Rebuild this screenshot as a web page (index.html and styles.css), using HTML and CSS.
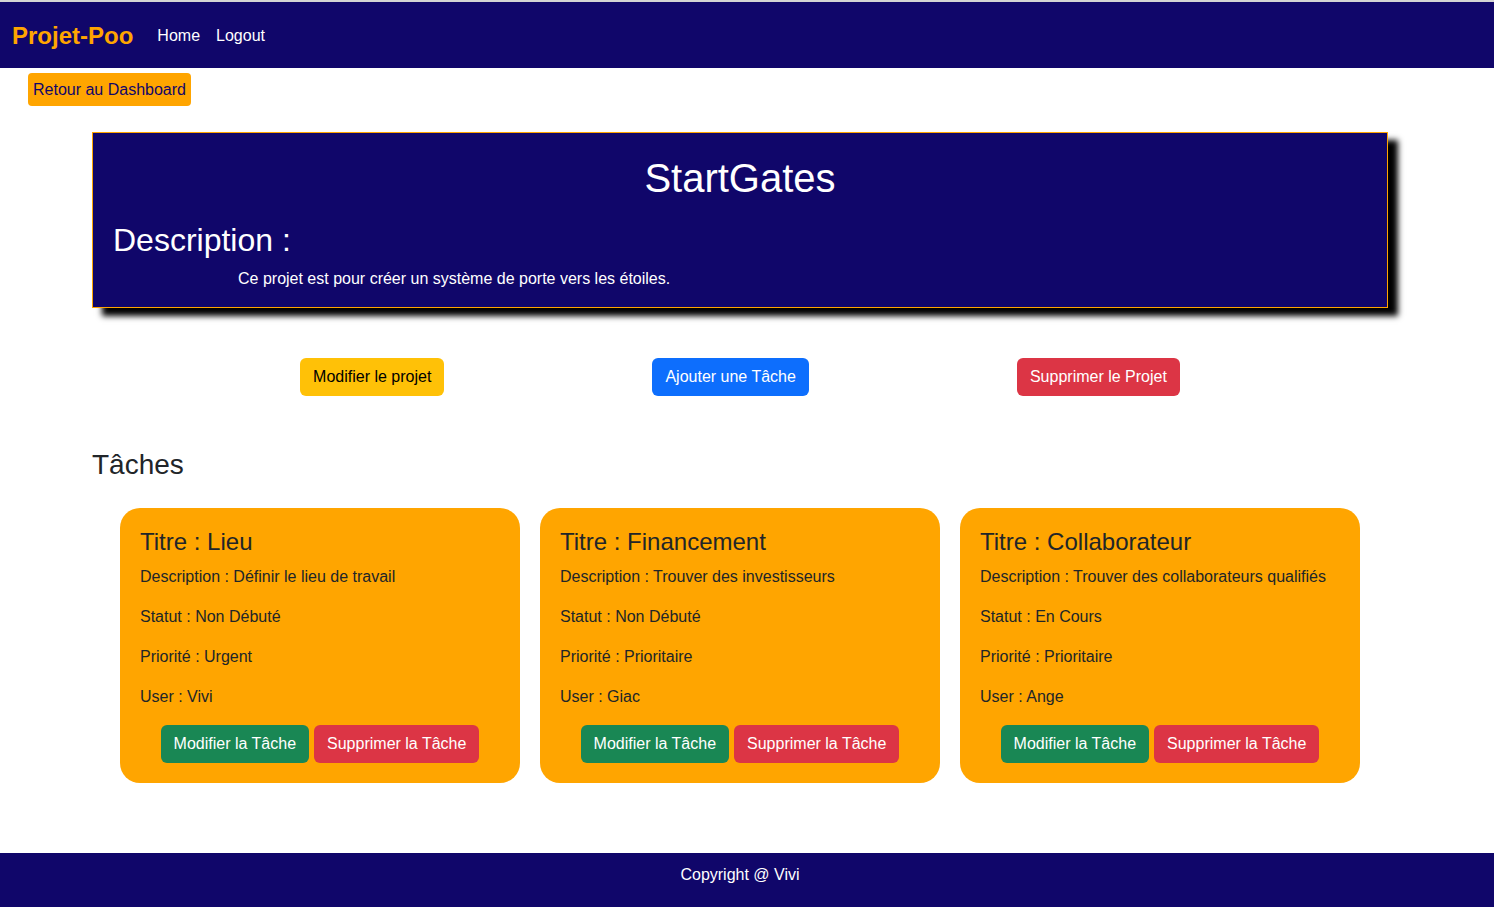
FILE: index.html
```html
<!DOCTYPE html>
<html lang="fr">
<head>
<meta charset="utf-8">
<title>Projet-Poo</title>
<link rel="stylesheet" href="styles.css">
</head>
<body>
<div class="page">
  <nav class="navbar">
    <a class="brand" href="#">Projet-Poo</a>
    <a class="nav-link" href="#">Home</a>
    <a class="nav-link" href="#">Logout</a>
  </nav>
  <main class="main">
    <div class="back-row">
      <a class="btn btn-back" href="#">Retour au Dashboard</a>
    </div>
    <section class="project">
      <h1 class="project-title">StartGates</h1>
      <h2 class="project-sub">Description :</h2>
      <p class="project-desc">Ce projet est pour créer un système de porte vers les étoiles.</p>
    </section>
    <div class="actions">
      <a class="btn btn-warning" href="#">Modifier le projet</a>
      <a class="btn btn-primary" href="#">Ajouter une Tâche</a>
      <a class="btn btn-danger" href="#">Supprimer le Projet</a>
    </div>
    <h3 class="tasks-title">Tâches</h3>
    <div class="cards">
      <div class="card">
        <h4 class="card-title">Titre : Lieu</h4>
        <p>Description : Définir le lieu de travail</p>
        <p>Statut : Non Débuté</p>
        <p>Priorité : Urgent</p>
        <p>User : Vivi</p>
        <div class="card-actions">
          <a class="btn btn-success" href="#">Modifier la Tâche</a>
          <a class="btn btn-danger" href="#">Supprimer la Tâche</a>
        </div>
      </div>
      <div class="card">
        <h4 class="card-title">Titre : Financement</h4>
        <p>Description : Trouver des investisseurs</p>
        <p>Statut : Non Débuté</p>
        <p>Priorité : Prioritaire</p>
        <p>User : Giac</p>
        <div class="card-actions">
          <a class="btn btn-success" href="#">Modifier la Tâche</a>
          <a class="btn btn-danger" href="#">Supprimer la Tâche</a>
        </div>
      </div>
      <div class="card">
        <h4 class="card-title">Titre : Collaborateur</h4>
        <p>Description : Trouver des collaborateurs qualifiés</p>
        <p>Statut : En Cours</p>
        <p>Priorité : Prioritaire</p>
        <p>User : Ange</p>
        <div class="card-actions">
          <a class="btn btn-success" href="#">Modifier la Tâche</a>
          <a class="btn btn-danger" href="#">Supprimer la Tâche</a>
        </div>
      </div>
    </div>
  </main>
  <footer class="footer">Copyright @ Vivi</footer>
</div>
</body>
</html>
```

FILE: styles.css
```css
* { box-sizing: border-box; }
html, body { margin: 0; padding: 0; }
body {
  font-family: "Liberation Sans", Arial, sans-serif;
  font-size: 16px;
  line-height: 1.5;
  color: #212529;
  background: #fff;
}
.page {
  min-height: 100vh;
  display: flex;
  flex-direction: column;
  border-top: 2px solid #d4d4d4;
}
.navbar {
  background: #10066a;
  height: 66px;
  display: flex;
  align-items: center;
  padding: 2px 12px 0;
}
.brand {
  color: #ffa500;
  font-weight: bold;
  font-size: 24px;
  text-decoration: none;
  margin-right: 24px;
  line-height: 1;
}
.nav-link {
  color: #fff;
  text-decoration: none;
  margin-right: 16px;
}
.main {
  flex: 1;
  padding: 0 106px 70px 92px;
}
.back-row {
  display: flex;
  margin: 5px 0 0 -64px;
}
.btn {
  display: inline-block;
  font-size: 16px;
  line-height: 24px;
  padding: 6px 12px;
  border-radius: 6px;
  text-decoration: none;
  border: 1px solid transparent;
}
.btn-back {
  background: #ffa500;
  color: #10066a;
  border: 0;
  padding: 5px 5px 4px;
  border-radius: 4px;
}
.btn-warning { background: #ffc107; color: #000; }
.btn-primary { background: #0d6efd; color: #fff; }
.btn-danger { background: #dc3545; color: #fff; }
.btn-success { background: #198754; color: #fff; }
.project {
  margin-top: 26px;
  background: #10066a;
  border: 1px solid #ffa500;
  box-shadow: 10px 8px 6px #000;
  color: #fff;
  padding: 21px 20px 0 20px;
}
.project-title {
  margin: 0 0 19px;
  font-size: 40px;
  font-weight: normal;
  line-height: 1.2;
  text-align: center;
}
.project-sub {
  margin: 0 0 8px;
  font-size: 32px;
  font-weight: normal;
  line-height: 1.2;
}
.project-desc {
  margin: 0 0 16px 125px;
}
.actions {
  display: flex;
  justify-content: space-evenly;
  margin-top: 50px;
}
.tasks-title {
  margin: 52px 0 26px;
  font-size: 28px;
  font-weight: normal;
  line-height: 1.2;
}
.cards {
  display: flex;
  justify-content: center;
  gap: 20px;
}
.card {
  width: 400px;
  background: #ffa500;
  border-radius: 20px;
  padding: 20px 20px 20px;
}
.card-title {
  margin: 0 0 8px;
  font-size: 24px;
  font-weight: normal;
  line-height: 1.2;
}
.card p {
  margin: 0 0 16px;
}
.card-actions {
  display: flex;
  justify-content: center;
  gap: 5px;
  margin-top: 13px;
}
.footer {
  background: #10066a;
  color: #fff;
  text-align: center;
  height: 54px;
  padding: 10px 14px 0 0;
}
```
